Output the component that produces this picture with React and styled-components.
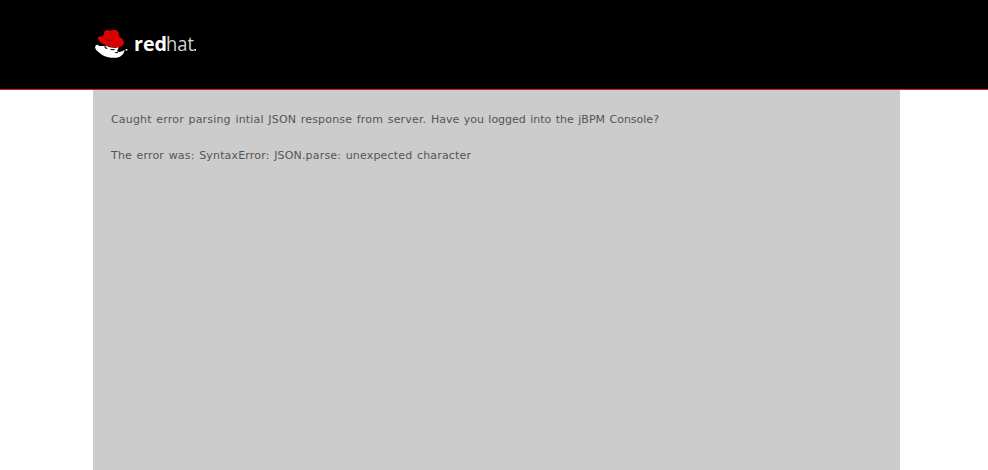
import React from 'react';
import styled, { createGlobalStyle } from 'styled-components';

const GlobalStyle = createGlobalStyle`
  body {
    margin: 0;
    background: #fff;
    font-family: "DejaVu Sans", Verdana, sans-serif;
  }
`;

const Page = styled.div`
  display: flex;
  flex-direction: column;
  height: 470px;
  overflow: hidden;
`;

const Header = styled.header`
  box-sizing: border-box;
  flex: none;
  height: 90px;
  padding: 24px 0 0 88px;
  background: #000;
  border-bottom: 1px solid #cc2410;
`;

const Logo = styled.svg`
  display: block;
  width: 116px;
  height: 40px;
`;

const Wordmark = styled.text`
  font-family: "Open Sans", "Noto Sans", sans-serif;
  font-size: 59px;
  font-weight: ${(p) => (p.$bold ? 700 : 400)};
  fill: ${(p) => (p.$bold ? '#fff' : '#d4d4d4')};
`;

const Content = styled.main`
  box-sizing: border-box;
  flex: 1;
  width: 807px;
  margin-left: 93px;
  padding: 21px 18px;
  background: #ccc;
`;

const Message = styled.p`
  margin: 0 0 18px;
  font-size: 11px;
  line-height: 18px;
  word-spacing: 0.95px;
  color: #555;
  white-space: nowrap;
`;

const Sentence = styled.span`
  letter-spacing: ${(p) => p.$tracking}px;
`;

export default function App() {
  return (
    <Page>
      <GlobalStyle />
      <Header>
        <Logo viewBox="0 0 348 120" role="img" aria-label="redhat">
          <path
            fill="#fff"
            d="M21 69 Q23 61 30 62 L37 71 Q46 78 57 76 L52 64 Q72 76 92 69 Q92 75 87 81 L94 84 Q104 82 110 77 Q108 90 96 98 Q84 103 68 101 Q46 98 34 86 Q22 78 21 69Z"
          />
          <path fill="#fff" d="M32 66 L48 66 L60 73 L62 86 L42 84Z" />
          <path fill="#000" d="M48 68 L57 71 L58 75 L53 74Z M68 75 L82 76 L78 79 L68 78Z M78 86 L92 82 L88 88Z" />
          <path
            fill="#dc0000"
            d="M50 20 Q58 16 66 20 Q74 17 84 18 Q92 20 95 40 Q108 46 108 56 Q107 68 88 70 Q64 71 44 59 Q29 50 29 41 Q31 35 45 37Z"
          />
          <path fill="none" stroke="#700" strokeWidth="2" d="M45 39 Q48 46 60 49 Q68 51 73 49 M62 28 L71 30" />
          <rect x="113" y="75" width="5" height="5" fill="#fff" />
          <Wordmark $bold x="138" y="80.5" textLength="99" lengthAdjust="spacingAndGlyphs">red</Wordmark>
          <Wordmark x="234" y="80.5" textLength="84" lengthAdjust="spacingAndGlyphs">hat</Wordmark>
          <rect x="319" y="75" width="5" height="5" fill="#fff" />
        </Logo>
      </Header>
      <Content>
        <Message>
          <Sentence $tracking={0.18}>Caught error parsing intial JSON response from server. </Sentence>
          <Sentence $tracking={0}>Have you logged into the jBPM Console?</Sentence>
        </Message>
        <Message>
          <Sentence $tracking={0.17}>The error was: SyntaxError: JSON.parse: unexpected character</Sentence>
        </Message>
      </Content>
    </Page>
  );
}
